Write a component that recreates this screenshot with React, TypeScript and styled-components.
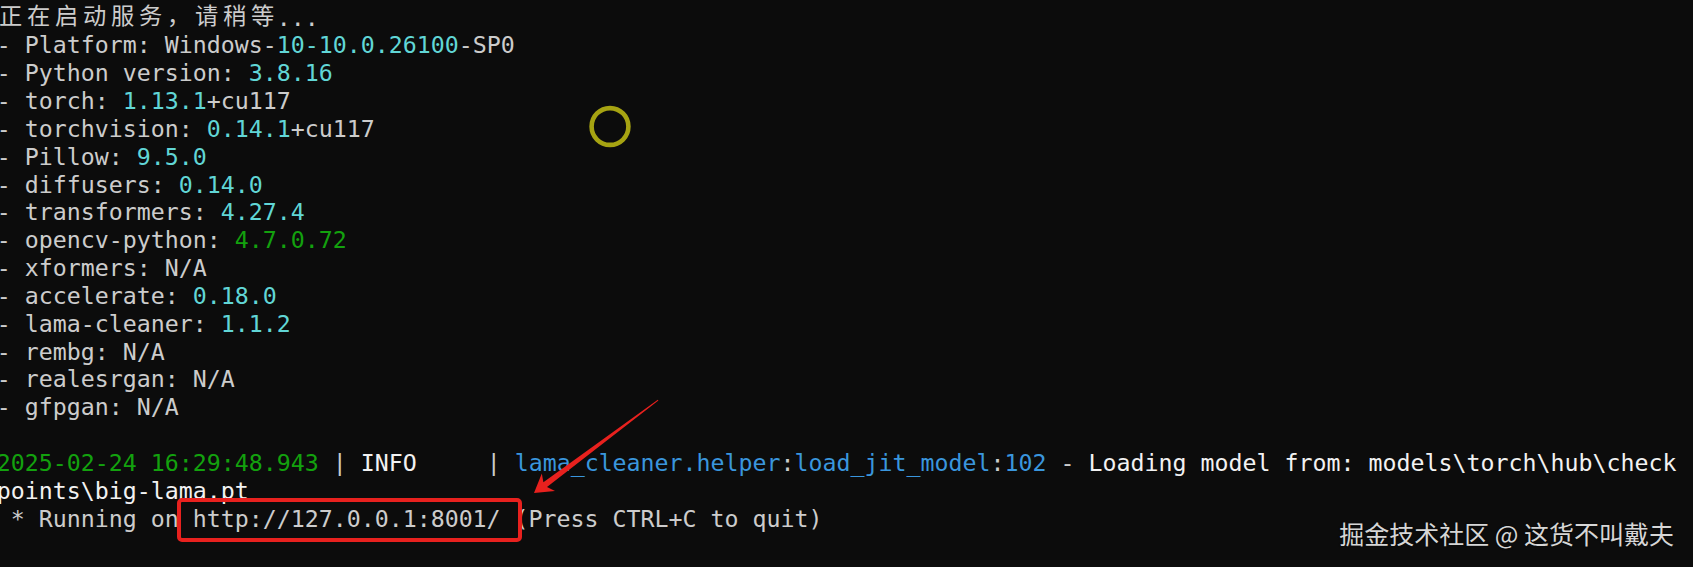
import React from "react";
import styled, { createGlobalStyle } from "styled-components";

const GlobalStyle = createGlobalStyle`
  html, body {
    margin: 0;
    padding: 0;
    background: #0c0c0c;
  }
  body {
    overflow: hidden;
  }
`;

const Screen = styled.div`
  position: relative;
  width: 1693px;
  height: 567px;
  background: #0c0c0c;
  overflow: hidden;
`;

const Console = styled.pre`
  margin: 0 0 0 -3.3px;
  padding: 3.5px 0 0;
  font-family: "DejaVu Sans Mono", "Liberation Mono", monospace;
  font-size: 23.25px;
  color: #cccccc;
  white-space: pre;
`;

const Line = styled.div`
  height: 27.85px;
  line-height: 27.85px;
`;

type Tone = "plain" | "num" | "green" | "blue" | "bright";

const toneColor: Record<Tone, string> = {
  plain: "#cccccc",
  num: "#61d6d6",
  green: "#13a10e",
  blue: "#3a96dd",
  bright: "#f2f2f2",
};

const Seg = styled.span<{ $tone: Tone }>`
  color: ${(p) => toneColor[p.$tone]};
`;

const Cjk = styled.span`
  font-family: "Noto Sans CJK SC", sans-serif;
  letter-spacing: 4.75px;
  line-height: 0;
  vertical-align: 2px;
  padding-left: 2.4px;
  margin-right: -2.4px;
`;

const Watermark = styled.div`
  position: absolute;
  right: 19px;
  top: 521px;
  font-family: "Noto Sans CJK SC", sans-serif;
  font-size: 25px;
  line-height: 25px;
  color: #d6d6d6;
  text-shadow: 0 0 2px rgba(0, 0, 0, 0.6);
  white-space: pre;
`;

const Overlay = styled.svg`
  position: absolute;
  left: 0;
  top: 0;
  pointer-events: none;
`;

type Part = [string, Tone?];

const lines: Part[][] = [
  [],
  [["- Platform: Windows-"], ["10-10.0.26100", "num"], ["-SP0"]],
  [["- Python version: "], ["3.8.16", "num"]],
  [["- torch: "], ["1.13.1", "num"], ["+cu117"]],
  [["- torchvision: "], ["0.14.1", "num"], ["+cu117"]],
  [["- Pillow: "], ["9.5.0", "num"]],
  [["- diffusers: "], ["0.14.0", "num"]],
  [["- transformers: "], ["4.27.4", "num"]],
  [["- opencv-python: "], ["4.7.0.72", "green"]],
  [["- xformers: N/A"]],
  [["- accelerate: "], ["0.18.0", "num"]],
  [["- lama-cleaner: "], ["1.1.2", "num"]],
  [["- rembg: N/A"]],
  [["- realesrgan: N/A"]],
  [["- gfpgan: N/A"]],
  [[" "]],
  [
    ["2025-02-24 16:29:48.943", "green"],
    [" | "],
    ["INFO    ", "bright"],
    [" | "],
    ["lama_cleaner.helper", "blue"],
    [":"],
    ["load_jit_model", "blue"],
    [":"],
    ["102", "blue"],
    [" - "],
    ["Loading model from: models\\torch\\hub\\check", "bright"],
  ],
  [["points\\big-lama.pt", "bright"]],
  [[" * Running on http://127.0.0.1:8001/ (Press CTRL+C to quit)"]],
];

export default function App() {
  return (
    <>
      <GlobalStyle />
      <Screen>
        <Console>
          {lines.map((parts, i) => (
            <Line key={i}>
              {i === 0 ? (
                <>
                  <Cjk>正在启动服务，请稍等</Cjk>
                  <Seg $tone="plain">...</Seg>
                </>
              ) : (
                parts.map(([text, tone], j) => (
                  <Seg key={j} $tone={tone ?? "plain"}>
                    {text}
                  </Seg>
                ))
              )}
            </Line>
          ))}
        </Console>
        <Watermark>掘金技术社区 @ 这货不叫戴夫</Watermark>
        <Overlay width="1693" height="567" viewBox="0 0 1693 567">
          <circle cx="610" cy="126.5" r="18.4" fill="none" stroke="#a6a312" strokeWidth="4.6" />
          <rect
            x="179"
            y="500"
            width="341"
            height="40"
            rx="3"
            fill="none"
            stroke="#e8211e"
            strokeWidth="4"
          />
          <polygon
            fill="#e8211e"
            points="658.4,400.5 547,487 555,491 534,493 541.8,473.4 543.4,482.2 657.8,399.7"
          />
        </Overlay>
      </Screen>
    </>
  );
}
